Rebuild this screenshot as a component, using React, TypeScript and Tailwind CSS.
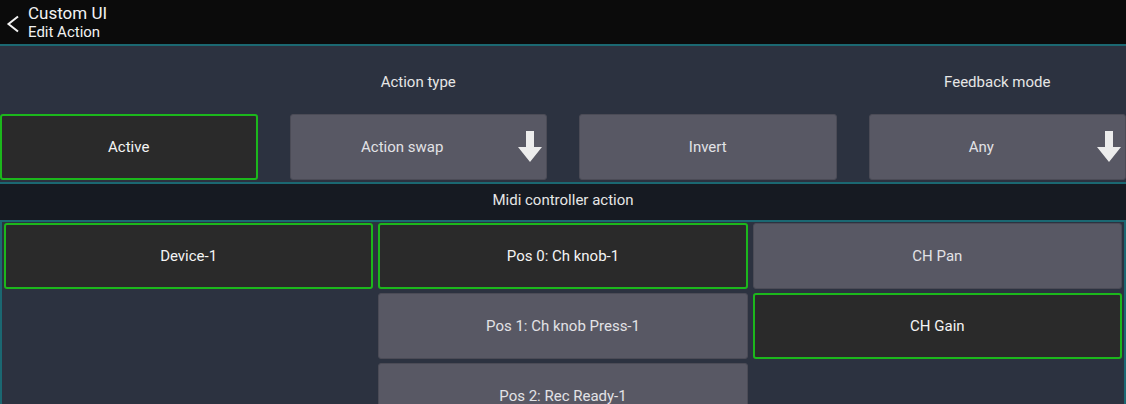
import { ReactNode } from "react";

const font = { fontFamily: "Roboto, 'Liberation Sans', sans-serif" };

function DownArrow() {
  return (
    <svg width="24" height="32" viewBox="0 0 24 32" className="shrink-0">
      <path d="M8 0 H16 V16 H24 L12 31 L0 16 H8 Z" fill="#ececec" />
    </svg>
  );
}

function Btn({
  active,
  label,
  arrow,
}: {
  active?: boolean;
  label: string;
  arrow?: boolean;
}) {
  const look = active
    ? "bg-[#2a2a2a] border-2 border-[#1cb71c] text-[#f4f4f4]"
    : "bg-[#585864] border border-[#4b4b56] text-[#e2e2e6]";
  return (
    <div className={`h-[66px] flex items-center rounded-[3px] text-[15px] ${look}`}>
      <span className="flex-1 text-center">{label}</span>
      {arrow && (
        <span className="w-8 flex justify-end pr-[4px]">
          <DownArrow />
        </span>
      )}
    </div>
  );
}

function Label({ children }: { children?: ReactNode }) {
  return (
    <div className="h-5 flex items-center justify-center text-[15px] text-[#e6e6e6]">
      {children}
    </div>
  );
}

export default function App() {
  return (
    <div className="w-[1126px] h-[404px] overflow-hidden bg-[#2c3240]" style={font}>
      {/* Header */}
      <div className="h-[46px] bg-[#0b0b0b] border-b-2 border-[#1b6872] flex items-center">
        <svg width="14" height="18" viewBox="0 0 14 18" className="ml-[6px] mt-[4px]">
          <path d="M12 1.5 L2.5 9 L12 16.5" stroke="#f2f2f2" strokeWidth="2" fill="none" />
        </svg>
        <div className="ml-[8px] flex flex-col text-[#f2f2f2]">
          <span className="text-[17px] leading-[20px]">Custom UI</span>
          <span className="text-[15px] leading-[18px]">Edit Action</span>
        </div>
      </div>

      {/* Action settings */}
      <div className="h-[136px] pt-[26px] grid grid-cols-4 gap-x-[32px] gap-y-[22px] content-start">
        <Label />
        <Label>Action type</Label>
        <Label />
        <Label>Feedback mode</Label>
        <Btn active label="Active" />
        <Btn label="Action swap" arrow />
        <Btn label="Invert" />
        <Btn label="Any" arrow />
      </div>

      {/* Section band */}
      <div className="h-[40px] pb-[3px] bg-[#161a22] border-y-2 border-[#1b6872] flex items-center justify-center text-[15px] text-[#e6e6e6]">
        Midi controller action
      </div>

      {/* Controller grid */}
      <div className="h-[200px] border-x-2 border-[#1b6872] px-[2px] pt-[1px] grid grid-cols-3 gap-x-[5px] items-start">
        <div className="flex flex-col gap-[4px]">
          <Btn active label="Device-1" />
        </div>
        <div className="flex flex-col gap-[4px]">
          <Btn active label="Pos 0: Ch knob-1" />
          <Btn label="Pos 1: Ch knob Press-1" />
          <Btn label="Pos 2: Rec Ready-1" />
        </div>
        <div className="flex flex-col gap-[4px]">
          <Btn label="CH Pan" />
          <Btn active label="CH Gain" />
        </div>
      </div>
    </div>
  );
}
